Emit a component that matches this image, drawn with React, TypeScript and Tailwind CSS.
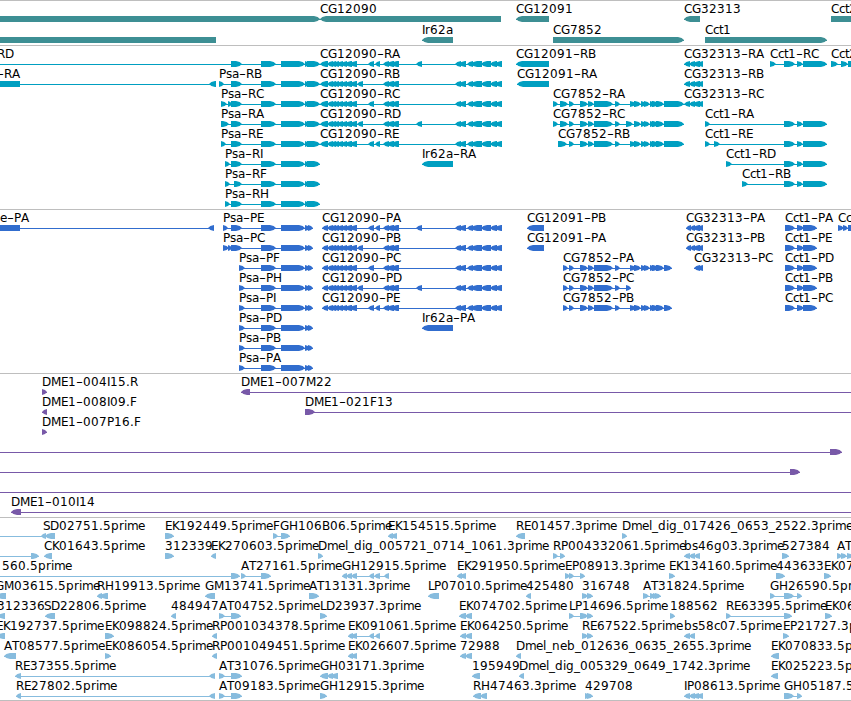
type Dir = "l" | "r" | "n";
type Feature = { d: Dir; b: number[][]; t?: string; x?: number; from?: number; to?: number };

// pixel advance of each glyph in the label font
const ADVANCE: Record<string, number> = {
    A: 8, B: 8, C: 8, D: 9, E: 7, F: 7, G: 9, H: 9, I: 3, K: 7, L: 6, M: 10, P: 7, R: 8, S: 7, T: 7,
    a: 7, b: 8, c: 6, d: 8, e: 7, g: 8, i: 3, l: 3, m: 11, n: 8, p: 8, r: 5, s: 6, t: 4,
    "-": 7, "_": 6, ".": 4,
};

// splits a label round its hyphens, which are drawn wider than the font has them
const layoutLabel = (text: string, start: number) => {
    let x = start;
    return text
        .split(/(-)/)
        .filter(Boolean)
        .map((part) => {
            const xs = part.split("").map((ch) => {
                const at = x;
                x += ADVANCE[ch] ?? 8;
                return at;
            });
            return { part, xs: xs.join(" ") };
        });
};

const f = (t: string, x: number, d: Dir, b: number[][], from?: number, to?: number): Feature => ({ t, x, d, b, from, to });

const arrow = (a: number, b: number, d: Dir, y: number) => {
    const tip = Math.min(6, b - a);
    const mid = tip * 0.4;
    if (d === "l") {
        return `M${a} ${y + 3}L${a + mid} ${y + 1}L${a + tip} ${y}H${b}V${y + 6}H${a + tip}L${a + mid} ${y + 5}Z`;
    }
    if (d === "r") {
        return `M${b} ${y + 3}L${b - mid} ${y + 1}L${b - tip} ${y}H${a}V${y + 6}H${b - tip}L${b - mid} ${y + 5}Z`;
    }
    return `M${a} ${y}V${y + 6}H${b}V${y}Z`;
};

const genes: Feature[][] = [
    [
        { d: "r", b: [[-10, 320]] },
        f("CG12090", 320, "l", [[320, 501]]),
        f("CG12091", 516, "l", [[516, 549]]),
        f("CG32313", 684, "l", [[684, 700]]),
        f("Cct2", 831, "r", [[831, 870]]),
    ],
    [
        { d: "n", b: [[-10, 216]] },
        f("Ir62a", 422, "l", [[422, 453]]),
        f("CG7852", 553, "r", [[553, 684]]),
        f("Cct1", 705, "r", [[705, 827]]),
    ],
];

const psaEnd = [[261, 276], [281, 305], [305, 309], [307, 320]];
const psaProteinEnd = [[261, 276], [281, 305], [305, 310], [308, 313]];
const psaMid = [231, 242];

const cgStart = [[327, 333], [330, 336], [333, 339], [337, 343], [341, 347], [345, 352], [350, 357]];
const cgMid = [[383, 389], [387, 394], [391, 399]];
const cgEnd = [[455, 461], [459, 466], [467, 473], [471, 482], [481, 491], [490, 497], [495, 502]];
const cgA = [...cgStart, [368, 374], [375, 380], ...cgMid, [416, 422], ...cgEnd];
const cgB = [...cgStart, [357, 363], ...cgMid, ...cgEnd];
const cgC = [...cgStart, [368, 374], ...cgMid, ...cgEnd];
const cgD = [...cgStart, [357, 363], ...cgMid, [416, 422], ...cgEnd];
const cgE = [...cgStart, [368, 374], [375, 380], ...cgMid, ...cgEnd];

const cg7Mid = [[569, 574], [580, 588], [588, 594], [594, 613], [615, 620]];
const cg7Tail = [[641, 646], [644, 650], [650, 655], [652, 659], [656, 664]];
const cg7A = [...cg7Mid, [630, 636], [634, 641], ...cg7Tail];
const cg7C = [...cg7Mid, [626, 633], [634, 641], ...cg7Tail];

const cg32 = [[684, 690], [689, 695], [693, 700], [697, 703]];
const cg32P = [[686, 691], [690, 695], [693, 700], [697, 703]];
const cctEnd = [[784, 795], [797, 803], [803, 827]];
const cctP = [[785, 795], [797, 804], [803, 817]];

const transcripts: Feature[][] = [
    [
        f("RD", -3, "r", [psaMid, ...psaEnd], 0),
        f("CG12090-RA", 320, "l", [[320, 328], ...cgA]),
        f("CG12091-RB", 516, "l", [[516, 549]]),
        f("CG32313-RA", 684, "l", cg32),
        f("Cct1-RC", 770, "r", [[770, 776], ...cctEnd]),
        f("Cct2", 831, "r", [[831, 838], [841, 848], [848, 870]]),
    ],
    [
        f("-RA", -3, "l", [[-10, 20], [209, 216]]),
        f("Psa-RB", 219, "r", [[219, 224], psaMid, ...psaEnd]),
        f("CG12090-RB", 320, "l", [[320, 328], ...cgB]),
        f("CG12091-RA", 517, "l", [[517, 549]]),
        f("CG32313-RB", 684, "l", cg32),
    ],
    [
        f("Psa-RC", 221, "r", [[221, 227], [228, 232], psaMid, ...psaEnd]),
        f("CG12090-RC", 320, "l", [[320, 328], ...cgC]),
        f("CG7852-RA", 553, "r", [[553, 558], [560, 568], ...cg7A, [664, 684]]),
        f("CG32313-RC", 684, "l", cg32),
    ],
    [
        f("Psa-RA", 221, "r", [[221, 229], psaMid, ...psaEnd]),
        f("CG12090-RD", 320, "l", [[320, 328], ...cgD]),
        f("CG7852-RC", 553, "r", [[553, 558], [560, 568], ...cg7C, [664, 684]]),
        f("Cct1-RA", 705, "r", [[705, 710], ...cctEnd]),
    ],
    [
        f("Psa-RE", 221, "r", [[221, 226], psaMid, ...psaEnd]),
        f("CG12090-RE", 320, "l", [[320, 328], ...cgE]),
        f("CG7852-RB", 558, "r", [[558, 567], ...cg7A, [664, 684]]),
        f("Cct1-RE", 705, "r", [[705, 710], [714, 720], ...cctEnd]),
    ],
    [
        f("Psa-RI", 225, "r", [[225, 230], psaMid, ...psaEnd]),
        f("Ir62a-RA", 422, "l", [[422, 453]]),
        f("Cct1-RD", 726, "r", [[726, 732], ...cctEnd]),
    ],
    [
        f("Psa-RF", 225, "r", [[225, 230], [234, 242], ...psaEnd]),
        f("Cct1-RB", 742, "r", [[742, 748], ...cctEnd]),
    ],
    [f("Psa-RH", 225, "r", [[225, 230], psaMid, ...psaEnd])],
];

const psaP = (t: string) => f(t, 239, "r", [[239, 245], ...psaProteinEnd]);

const proteins: Feature[][] = [
    [
        f("e-PA", 0, "l", [[-6, 20], [208, 214]]),
        f("Psa-PE", 223, "r", [[223, 228], psaMid, ...psaProteinEnd]),
        f("CG12090-PA", 322, "l", [[322, 328], ...cgA]),
        f("CG12091-PB", 527, "l", [[527, 544]]),
        f("CG32313-PA", 686, "l", cg32P),
        f("Cct1-PA", 785, "r", cctP),
        f("Cc", 838, "r", [[838, 844], [843, 848], [848, 870]]),
    ],
    [
        f("Psa-PC", 223, "r", [[223, 229], [228, 232], psaMid, ...psaProteinEnd]),
        f("CG12090-PB", 322, "l", [[322, 328], ...cgB]),
        f("CG12091-PA", 527, "l", [[527, 544]]),
        f("CG32313-PB", 686, "l", cg32P),
        f("Cct1-PE", 785, "r", cctP),
    ],
    [
        psaP("Psa-PF"),
        f("CG12090-PC", 322, "l", [[322, 328], ...cgC]),
        f("CG7852-PA", 563, "r", [[563, 568], ...cg7A, [664, 672]]),
        f("CG32313-PC", 694, "l", [[694, 700], [697, 703]]),
        f("Cct1-PD", 785, "r", cctP),
    ],
    [
        psaP("Psa-PH"),
        f("CG12090-PD", 322, "l", [[322, 328], ...cgD]),
        f("CG7852-PC", 563, "r", [[563, 568], ...cg7Mid, [626, 631]]),
        f("Cct1-PB", 785, "r", cctP),
    ],
    [
        psaP("Psa-PI"),
        f("CG12090-PE", 322, "l", [[322, 328], ...cgE]),
        f("CG7852-PB", 563, "r", [[563, 568], ...cg7A, [664, 672]]),
        f("Cct1-PC", 785, "r", cctP),
    ],
    [psaP("Psa-PD"), f("Ir62a-PA", 422, "l", [[422, 453]])],
    [psaP("Psa-PB")],
    [psaP("Psa-PA")],
];

const clones: Feature[][] = [
    [f("DME1-004I15.R", 42, "r", [[42, 47]]), f("DME1-007M22", 241, "l", [[241, 250]], 241, 851)],
    [f("DME1-008I09.F", 42, "l", [[42, 47]]), f("DME1-021F13", 305, "r", [[305, 315]], 305, 851)],
    [f("DME1-007P16.F", 42, "r", [[42, 47]])],
    [{ d: "r", b: [[830, 842]], from: 0 }],
    [{ d: "r", b: [[790, 800]], from: 0 }],
    [{ d: "n", b: [], from: 0, to: 851 }],
    [f("DME1-010I14", 11, "l", [[11, 21]], 11, 851)],
];

const ests: Feature[][] = [
    [
        f("SD02751.5prime", 43, "l", [[41, 46], [45, 55]], 0),
        f("EK192449.5prime", 165, "r", [[165, 174]]),
        f("FGH106B06.5prime", 273, "r", [[273, 278], [281, 290]]),
        f("EK154515.5prime", 388, "l", [[388, 393], [391, 397]]),
        f("RE01457.3prime", 516, "l", [[516, 525]]),
        f("Dmel_dig_017426_0653_2522.3prime", 622, "r", [[622, 627]]),
    ],
    [
        { d: "r", b: [[31, 39]], from: 0 },
        f("CK01643.5prime", 44, "l", [[44, 52]]),
        f("312339", 165, "r", [[165, 174]]),
        f("EK270603.5prime", 211, "l", [[211, 216]]),
        f("Dmel_dig_005721_0714_1061.3prime", 318, "r", [[318, 323]]),
        f("RP004332061.5prime", 553, "r", [[553, 558], [560, 565]]),
        f("bs46g03.3prime", 684, "l", [[684, 690], [689, 695], [694, 700]]),
        f("527384", 782, "r", [[782, 789]]),
        f("AT", 837, "r", [[837, 842], [841, 847], [847, 853]]),
    ],
    [
        f("560.5prime", 2, "r", [[231, 240]], 0),
        f("AT27161.5prime", 241, "r", [[241, 246], [261, 271]]),
        f("GH12915.5prime", 342, "l", [[342, 347], [346, 352], [351, 357], [369, 374], [374, 380], [384, 389]]),
        f("EK291950.5prime", 457, "l", [[457, 462], [460, 466]]),
        f("EP08913.3prime", 565, "r", [[565, 570], [569, 574], [580, 585]]),
        f("EK134160.5prime", 669, "r", [[669, 675]]),
        f("443633", 776, "r", [[776, 785]]),
        f("EK07", 824, "r", [[824, 831]]),
    ],
    [
        f("GM03615.5prime", -5, "l", [[-4, 6]]),
        f("RH19913.5prime", 97, "l", [[97, 102], [100, 108]]),
        f("GM13741.5prime", 205, "l", [[205, 215]]),
        f("AT13131.3prime", 309, "r", [[309, 319]]),
        f("LP07010.5prime", 428, "l", [[428, 439]]),
        f("425480", 526, "l", [[526, 531]]),
        f("316748", 582, "r", [[582, 588], [587, 593]]),
        f("AT31824.5prime", 643, "r", [[643, 649], [650, 655], [653, 658], [655, 661]]),
        f("GH26590.5prime", 770, "r", [[770, 775], [784, 794], [797, 802]]),
    ],
    [
        f("312336", -3, "l", [[-2, 5]]),
        f("SD22806.5prime", 44, "l", [[45, 55]]),
        f("484947", 171, "l", [[171, 176]]),
        f("AT04752.5prime", 219, "r", [[219, 225], [231, 241]]),
        f("LD23937.3prime", 320, "r", [[320, 327]]),
        f("EK074702.5prime", 459, "l", [[459, 466], [465, 472]]),
        f("LP14696.5prime", 569, "r", [[569, 574], [580, 588], [587, 593]]),
        f("188562", 670, "r", [[670, 675]]),
        f("RE63395.5prime", 726, "r", [[726, 731], [784, 792]]),
        f("EK06", 825, "r", [[825, 832]]),
    ],
    [
        f("EK192737.5prime", -4, "l", [[-3, 5]]),
        f("EK098824.5prime", 105, "r", [[105, 114]]),
        f("RP001034378.5prime", 212, "l", [[212, 217]]),
        f("EK091061.5prime", 348, "l", [[348, 353], [351, 357], [369, 374], [375, 380]]),
        f("EK064250.5prime", 460, "l", [[460, 466], [465, 472]]),
        f("RE67522.5prime", 582, "r", [[582, 588], [587, 593]]),
        f("bs58c07.5prime", 684, "l", [[684, 690], [689, 695]]),
        f("EP21727.3prime", 783, "r", [[783, 789]]),
    ],
    [
        f("AT08577.5prime", 4, "l", [[4, 16]]),
        f("EK086054.5prime", 105, "r", [[105, 111]]),
        f("RP001049451.5prime", 212, "l", [[212, 217]]),
        f("EK026607.5prime", 348, "l", [[348, 353], [351, 357]]),
        f("72988", 460, "l", [[460, 466], [465, 472]]),
        f("Dmel_neb_012636_0635_2655.3prime", 516, "l", [[516, 521]]),
        f("EK070833.5prime", 771, "l", [[771, 779]]),
    ],
    [
        f("RE37355.5prime", 15, "l", [[15, 21], [209, 215]]),
        f("AT31076.5prime", 219, "r", [[219, 225], [231, 242]]),
        f("GH03171.3prime", 320, "l", [[320, 328], [327, 333], [331, 338]]),
        f("195949", 472, "l", [[472, 480]]),
        f("Dmel_dig_005329_0649_1742.3prime", 519, "l", [[519, 524]]),
        f("EK025223.5prime", 771, "l", [[771, 778]]),
    ],
    [
        f("RE27802.5prime", 16, "l", [[16, 21], [209, 215]]),
        f("AT09183.5prime", 219, "r", [[219, 225], [231, 242]]),
        f("GH12915.3prime", 320, "r", [[320, 327]]),
        f("RH47463.3prime", 473, "l", [[473, 481], [480, 487]]),
        f("429708", 585, "r", [[585, 590], [587, 593]]),
        f("IP08613.5prime", 684, "l", [[684, 690], [689, 695], [693, 699], [697, 703]]),
        f("GH05187.5prime", 784, "r", [[784, 794], [797, 802]]),
    ],
];

function Label({ text, x }: { text: string; x: number }) {
    return (
        <text y={12} className="fill-black text-[12px]">
            {layoutLabel(text, x).map(({ part, xs }, i) =>
                part === "-" ? (
                    <tspan key={i} x={xs} textLength={7} lengthAdjust="spacingAndGlyphs">
                        -
                    </tspan>
                ) : (
                    <tspan key={i} x={xs}>
                        {part}
                    </tspan>
                )
            )}
        </text>
    );
}

function Row({ features, className }: { features: Feature[]; className: string }) {
    return (
        <svg width="851" className={`block shrink-0 overflow-visible ${className}`}>
            {features.map((ft, i) => {
                const from = ft.from ?? ft.b[0][0];
                const to = ft.to ?? ft.b[ft.b.length - 1][1];
                return (
                    <g key={i} fill="currentColor">
                        <rect x={from} y={18} width={to - from} height={1} />
                        {ft.b.map(([a, b], j) => (
                            <path key={j} d={arrow(a, b, ft.d, 15)} />
                        ))}
                    </g>
                );
            })}
            {features.map((ft, i) => ft.t && <Label key={i} text={ft.t} x={ft.x ?? 0} />)}
        </svg>
    );
}

function Track({ rows, className, rowClass = "h-5" }: { rows: Feature[][]; className: string; rowClass?: string }) {
    return (
        <section className={`flex flex-col border-t border-[#bebebe] ${className}`}>
            {rows.map((features, i) => (
                <Row key={i} features={features} className={rowClass} />
            ))}
        </section>
    );
}

export default function App() {
    return (
        <main className="flex h-[701px] w-[851px] flex-col overflow-hidden border-b border-[#bebebe] bg-white font-['DejaVu_Sans',sans-serif]">
            <Track rows={genes} className="h-[45px] text-[#3d8f94]" rowClass="h-[21px]" />
            <Track rows={transcripts} className="h-[164px] text-[#009fc1]" />
            <Track rows={proteins} className="h-[164px] text-[#316dce]" />
            <Track rows={clones} className="h-[144px] text-[#7859a8]" />
            <Track rows={ests} className="h-[183px] text-[#87bcde]" />
        </main>
    );
}
